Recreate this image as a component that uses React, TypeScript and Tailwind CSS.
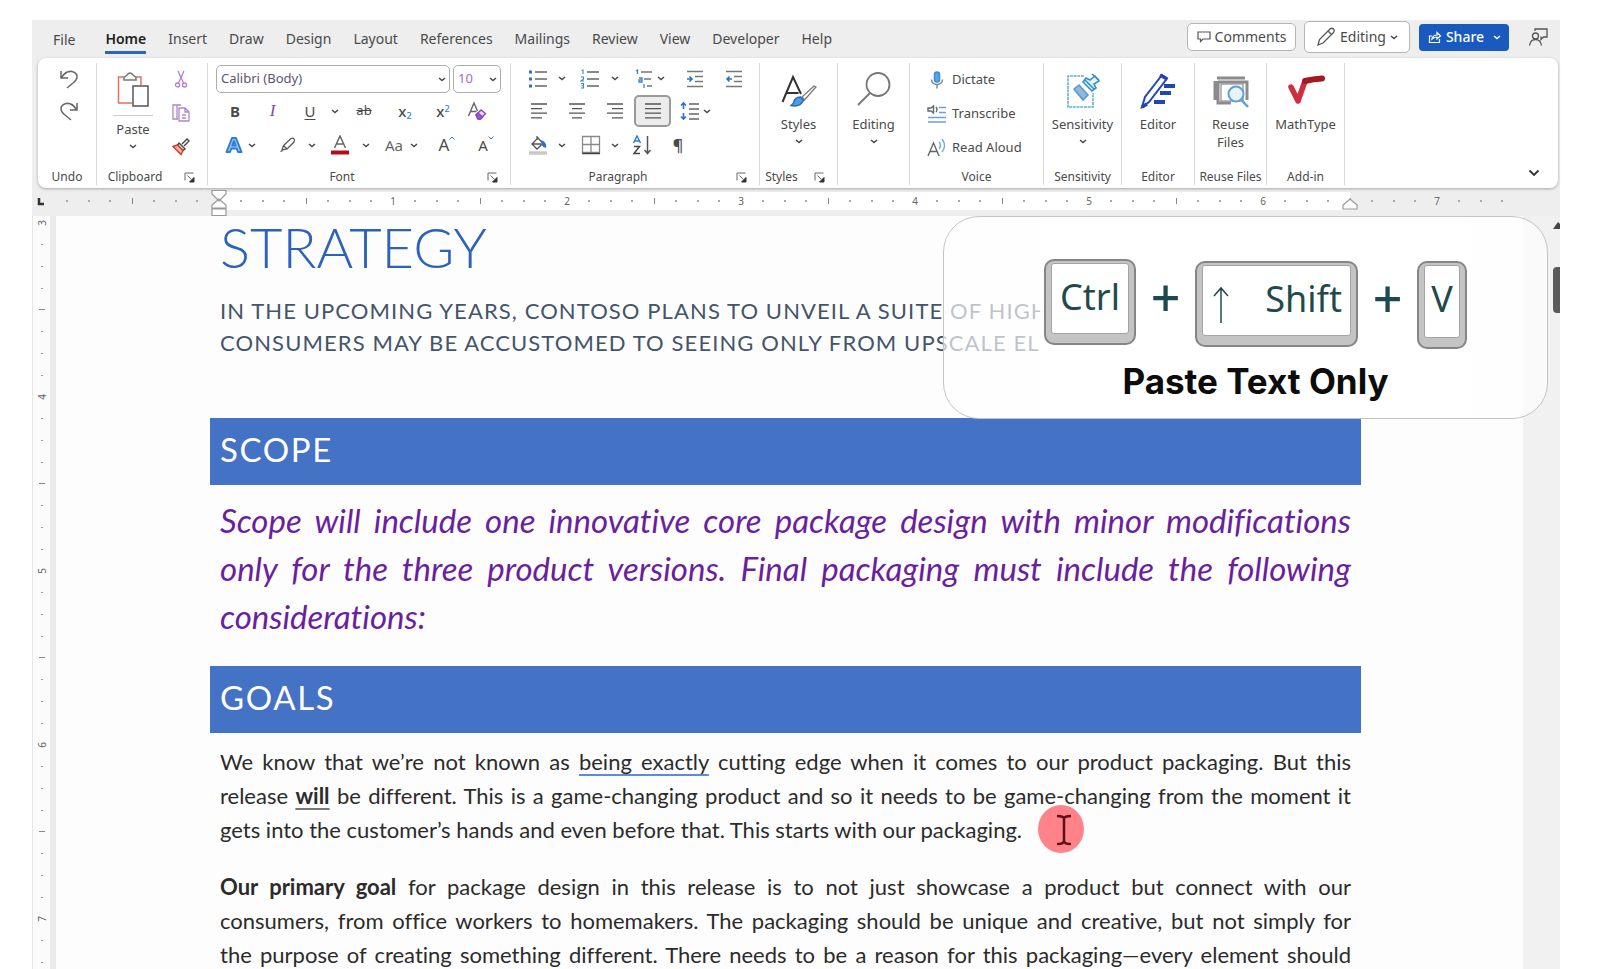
import React from "react";

const UI = "font-['Noto_Sans','Open_Sans',sans-serif]";
const DOC = "font-[Lato,'Noto_Sans',sans-serif]";

function Caret({ className = "" }: { className?: string }) {
  return (
    <svg viewBox="0 0 8 5" className={"h-[5px] w-2 shrink-0 " + className} fill="none" stroke="currentColor" strokeWidth="1.5">
      <path d="M1 1l3 2.6L7 1" />
    </svg>
  );
}

function CaretButton({ label, className = "" }: { label: string; className?: string }) {
  return (
    <button aria-label={label} className={"flex h-6 w-3 items-center justify-center " + className}>
      <Caret />
    </button>
  );
}

function Tool({ label, className, children }: { label: string; className: string; children: React.ReactNode }) {
  return (
    <button aria-label={label} className={"flex h-8 shrink-0 items-center justify-center " + className}>
      {children}
    </button>
  );
}

function Launcher() {
  return (
    <button aria-label="More options" className="flex h-4 w-3 items-center justify-center">
      <svg viewBox="0 0 11 11" className="h-[11px] w-[11px]" fill="none" stroke="#666">
        <path d="M1 8.5V1h8.5M3.5 3.5l4 4" />
        <path d="M10 5.5V10H5.5z" fill="#333" stroke="#333" />
      </svg>
    </button>
  );
}

function Group({ label, launcher, className, children }: { label: string; launcher?: boolean; className: string; children: React.ReactNode }) {
  return (
    <section aria-label={label || "Editing"} className={"flex h-[122px] shrink-0 flex-col border-r border-[#d9d9d9] " + className}>
      <div className="h-[106px] shrink-0">{children}</div>
      <div className="flex h-4 shrink-0 items-center">
        <span className={"flex-1 whitespace-nowrap text-center text-xs leading-4 " + (launcher ? "pr-2.5" : "")}>{label}</span>
        {launcher && (
          <span className="pr-3">
            <Launcher />
          </span>
        )}
      </div>
    </section>
  );
}

function BigButton({ label, second, caret, icon }: { label: string; second?: string; caret?: boolean; icon: React.ReactNode }) {
  return (
    <button className="flex w-full flex-col items-center pt-1 text-[13px] leading-[18px]">
      <span className="flex h-12 items-center justify-center">{icon}</span>
      <span className="whitespace-nowrap">{label}</span>
      {second && <span>{second}</span>}
      {caret && <Caret className="mt-1.5" />}
    </button>
  );
}

function Lines({ rows }: { rows: number[][] }) {
  return (
    <svg viewBox="0 0 18 18" className="h-[18px] w-[18px]" stroke="#555" strokeWidth="1.3">
      {rows.map(([a, b], i) => (
        <path key={i} d={`M${a} ${2 + i * 4.6}H${b}`} />
      ))}
    </svg>
  );
}

function ListIcon({ kind }: { kind: "bullet" | "number" | "multi" }) {
  if (kind === "multi")
    return (
      <svg viewBox="0 0 20 20" className="h-5 w-5" fill="none" stroke="#777" strokeWidth="1.3">
        <path d="M7 3h11M10 10h7M13 17h5" />
        <path d="M2 2l1.5-1v4M5 9h3v4H5v-2h3M10 15v4" stroke="#3a86d0" />
      </svg>
    );
  return (
    <svg viewBox="0 0 20 20" className="h-5 w-5" fill="none" stroke="#666" strokeWidth="1.3">
      <path d="M7 3h12M7 10h12M7 17h12" />
      {kind === "bullet" ? (
        <g fill="#2a72c8" stroke="none">
          <rect x="1" y="1.5" width="3" height="3" />
          <rect x="1" y="8.5" width="3" height="3" />
          <rect x="1" y="15.5" width="3" height="3" />
        </g>
      ) : (
        <path d="M1.5 1.5L3 1v4M1 8h2.500v2L1 12h3M1 14.500h2.500v4.500H1M1.500 16.700h2" stroke="#3a86d0" strokeWidth="1.100" />
      )}
    </svg>
  );
}

function IndentIcon({ left }: { left?: boolean }) {
  return (
    <svg viewBox="0 0 18 20" className="h-5 w-[18px]" fill="none" stroke="#777" strokeWidth="1.3">
      <path d="M1 2.500h16M9 7.500h8M9 12.500h8M1 17.500h16" />
      <path d={left ? "M7 10H2M4.500 7.500L2 10l2.500 2.500" : "M1 10h5M3.500 7.500L6 10l-2.500 2.500"} stroke="#2a72c8" strokeWidth="1.600" />
    </svg>
  );
}

const tabs = ["Home", "Insert", "Draw", "Design", "Layout", "References", "Mailings", "Review", "View", "Developer", "Help"];

function TabBar() {
  return (
    <header className="flex h-[38px] items-start justify-between pl-[21px] pr-3">
      <nav className="flex gap-[22px] pt-1.5 text-sm leading-6">
        <button className="mr-2 h-7">File</button>
        {tabs.map((t) => (
          <button
            key={t}
            className={t === "Home" ? "h-7 border-b-[3px] border-[#2f67b8] font-semibold text-[#222]" : "h-7 border-b-[3px] border-transparent"}
          >
            {t}
          </button>
        ))}
      </nav>
      <div className="flex h-[34px] items-center text-sm">
        <button className="flex h-[28px] w-[109px] items-center justify-center gap-1 rounded-[5px] border border-[#b5b5b5] bg-white">
          <svg viewBox="0 0 14 12" className="h-3 w-[14px]" fill="none" stroke="#555" strokeWidth="1.200">
            <path d="M1 1h12v7H6L3.500 10.500V8H1z" />
          </svg>
          Comments
        </button>
        <button className="ml-2 flex h-[32px] w-[106px] items-center justify-center gap-1 rounded-[5px] border border-[#b5b5b5] bg-white">
          <svg viewBox="0 0 20 20" className="h-5 w-5" fill="none" stroke="#555" strokeWidth="1.300">
            <path d="M2 18l1.500-5.500L14 2q2-1.500 3.500 0t0 3.500L7 16zM12 4l3.500 3.500" />
          </svg>
          Editing
          <Caret />
        </button>
        <div className="ml-[9px] flex h-[27px] w-[90px] items-center rounded-[4px] bg-[#185abd] text-white">
          <button className="flex flex-1 items-center justify-center gap-1 font-medium">
            <svg viewBox="0 0 14 14" className="h-[14px] w-[14px]" fill="none" stroke="#fff" strokeWidth="1.200">
              <path d="M4 6H1.500v6.500h10V9" />
              <path d="M4 9q.5-4 5-4V2.500L12.500 6 9 9V7Q6 7 4 9z" />
            </svg>
            Share
          </button>
          <button aria-label="Share options" className="flex h-full w-4 items-center">
            <Caret />
          </button>
        </div>
        <button aria-label="Feedback" className="ml-[19px]">
          <svg viewBox="0 0 20 20" className="h-5 w-5" fill="none" stroke="#555" strokeWidth="1.300">
            <circle cx="7.500" cy="9" r="3" />
            <path d="M1.500 18.500q1-6 6-6t6 6M7 4V2h12v8h-3.500L13 12.500V9.500" />
          </svg>
        </button>
      </div>
    </header>
  );
}

function FontGroup() {
  return (
    <Group label="Font" launcher className="w-[303px]">
      <div className="flex h-[31px] items-start gap-[3px] pl-2 pt-0.5">
        <div className="relative">
          <select aria-label="Font" className="h-[28px] w-[234px] appearance-none rounded-[5px] border border-[#adadad] bg-white pl-1 text-[13px] text-[#5f5378]">
            <option>Calibri (Body)</option>
          </select>
          <Caret className="pointer-events-none absolute right-1 top-3" />
        </div>
        <div className="relative">
          <select aria-label="Font size" className="h-[28px] w-[48px] appearance-none rounded-[5px] border border-[#adadad] bg-white pl-1 text-[13px] text-[#a06cc4]">
            <option>10</option>
          </select>
          <Caret className="pointer-events-none absolute right-1 top-3" />
        </div>
      </div>
      <div className="flex h-[34px] items-center pl-2">
        <Tool label="Bold" className="w-[38px] text-[15px] font-bold">B</Tool>
        <Tool label="Italic" className="w-[37px] font-['Liberation_Serif',serif] text-[17px] italic text-[#8e44ad]">I</Tool>
        <Tool label="Underline" className="w-[38px] text-[15px] underline underline-offset-2">U</Tool>
        <CaretButton label="Underline styles" />
        <Tool label="Strikethrough" className="w-[46px] text-[13px] line-through">ab</Tool>
        <Tool label="Subscript" className="w-9 text-[15px] font-medium">
          <span>x<sub className="text-[9px] text-[#2a7fd4]">2</sub></span>
        </Tool>
        <Tool label="Superscript" className="w-10 text-[15px] font-medium">
          <span>x<sup className="text-[9px] text-[#2a7fd4]">2</sup></span>
        </Tool>
        <Tool label="Clear formatting" className="w-7">
          <svg viewBox="0 0 20 20" className="h-5 w-5" fill="none" stroke="#666" strokeWidth="1.400">
            <path d="M1.500 15L7 2l3.500 8M3.500 10.500h6" />
            <path d="M9 14l5-5 4.500 3.500-5 5.500H11z" stroke="#8a45c0" fill="#e6d4f4" />
            <path d="M9 14l2-2 4.500 4-2 2H11z" stroke="#8a45c0" fill="#9b59d0" />
          </svg>
        </Tool>
      </div>
      <div className="flex h-[34px] items-center pl-3.5">
        <Tool label="Text effects" className="w-6">
          <svg viewBox="0 0 18 18" className="h-[18px] w-[18px]" stroke="#2d7fd3" strokeWidth="2" strokeLinejoin="round">
            <path d="M1.500 16L7 2h4l5.500 14h-3.500l-1.300-3.500H6.300L5 16zM7.300 9.500h3.400L9 5z" fill="#9cc6ef" fillRule="evenodd" />
          </svg>
        </Tool>
        <CaretButton label="Text effect styles" />
        <Tool label="Highlight" className="ml-3 w-9">
          <svg viewBox="0 0 18 18" className="h-[18px] w-[18px]" fill="none" stroke="#555" strokeWidth="1.300">
            <path d="M3 14l1.500-4.500L12 2.500q2-1 3 .5t0 3L8 13zM4.500 9.500L8 13M1.500 15.500l2.500-1" />
          </svg>
        </Tool>
        <CaretButton label="Highlight colors" />
        <Tool label="Font color" className="ml-0.5 w-10">
          <svg viewBox="0 0 20 20" className="h-5 w-5" fill="none" stroke="#666" strokeWidth="1.500">
            <path d="M4.500 13L10 1l5.500 12M6.500 9h7" />
            <path d="M1 17.500h18" stroke="#b30d17" strokeWidth="4" />
          </svg>
        </Tool>
        <CaretButton label="Font colors" />
        <Tool label="Change case" className="ml-2 w-[28px] text-[15px] text-[#666]">Aa</Tool>
        <CaretButton label="Case options" />
        <Tool label="Grow font" className="ml-2 w-[38px] text-[17px]">
          <span className="flex items-start">
            A
            <svg viewBox="0 0 6 4" className="mt-1 h-1 w-1.5" fill="none" stroke="#2a7fd4">
              <path d="M.5 3.500L3 1l2.500 2.500" />
            </svg>
          </span>
        </Tool>
        <Tool label="Shrink font" className="w-10 text-[15px]">
          <span className="flex items-start">
            A
            <svg viewBox="0 0 6 4" className="mt-0.5 h-1 w-1.5" fill="none" stroke="#2a7fd4">
              <path d="M.5.5L3 3 5.500.5" />
            </svg>
          </span>
        </Tool>
      </div>
    </Group>
  );
}

function ParagraphGroup() {
  return (
    <Group label="Paragraph" launcher className="w-[249px]">
      <div className="flex h-[31px] items-center pl-4">
        <Tool label="Bullets" className="w-[22px]"><ListIcon kind="bullet" /></Tool>
        <CaretButton label="Bullet styles" className="ml-[7px]" />
        <Tool label="Numbering" className="ml-[11px] w-[22px]"><ListIcon kind="number" /></Tool>
        <CaretButton label="Number styles" className="ml-[8px]" />
        <Tool label="Multilevel list" className="ml-[12px] w-[22px]"><ListIcon kind="multi" /></Tool>
        <CaretButton label="Multilevel styles" />
        <Tool label="Decrease indent" className="ml-[17px] w-[22px]"><IndentIcon /></Tool>
        <Tool label="Increase indent" className="ml-[17px] w-[22px]"><IndentIcon left /></Tool>
      </div>
      <div className="flex h-[34px] items-center pl-2">
        <Tool label="Align left" className="w-[39px]"><Lines rows={[[1, 17], [1, 12], [1, 17], [1, 12]]} /></Tool>
        <Tool label="Center" className="w-[38px]"><Lines rows={[[1, 17], [4, 14], [1, 17], [4, 14]]} /></Tool>
        <Tool label="Align right" className="w-[38px]"><Lines rows={[[1, 17], [6, 17], [1, 17], [6, 17]]} /></Tool>
        <Tool label="Justify" className="w-[37px] rounded-[5px] border-2 border-[#9a9a9a] bg-[#ececec]"><Lines rows={[[1, 17], [1, 17], [1, 17], [1, 17]]} /></Tool>
        <Tool label="Line spacing" className="ml-2 w-[22px]">
          <svg viewBox="0 0 20 20" className="h-5 w-5" fill="none" stroke="#666" strokeWidth="1.300">
            <path d="M9 3h10M9 8h10M9 13h10M9 18h10" />
            <path d="M3.500 2v6M1 4.500L3.500 2 6 4.500M3.500 12v6M1 15.500L3.500 18 6 15.500" stroke="#2a72c8" strokeWidth="1.600" />
          </svg>
        </Tool>
        <CaretButton label="Spacing options" />
      </div>
      <div className="flex h-[34px] items-center pl-4">
        <Tool label="Shading" className="w-[22px]">
          <svg viewBox="0 0 20 20" className="h-5 w-5" fill="none" stroke="#555" strokeWidth="1.300">
            <path d="M4 9l6-6 5 5.500-6 5.500zM9 5V1M4 9h9" />
            <path d="M14 6q4 2 3.500 6-2.500-.5-3.500-3z" fill="#2a72c8" stroke="#2a72c8" />
            <path d="M1 18h18" stroke="#c9c9c9" strokeWidth="3.500" />
          </svg>
        </Tool>
        <CaretButton label="Shading colors" className="ml-[7px]" />
        <Tool label="Borders" className="ml-[12px] w-[22px]">
          <svg viewBox="0 0 20 20" className="h-5 w-5" fill="none" stroke="#888" strokeWidth="1.300">
            <path d="M1.500 1.500h17v16h-17zM10 1.500v16M1.500 9.500h17" />
            <path d="M1 18.500h18" stroke="#444" />
          </svg>
        </Tool>
        <CaretButton label="Border styles" className="ml-[7px]" />
        <Tool label="Sort" className="ml-[10px] w-[22px]">
          <svg viewBox="0 0 20 20" className="h-5 w-5" fill="none" strokeWidth="1.500">
            <path d="M1.500 8L5 1l3.500 7M2.700 6h4.600" stroke="#2a7fd4" />
            <path d="M2 11.500h5.500L2 18.500h6" stroke="#444" />
            <path d="M15.500 1v17M12.500 15l3 3.500 3-3.500" stroke="#555" />
          </svg>
        </Tool>
        <Tool label="Show marks" className="ml-3.5 w-[22px] text-base font-semibold">¶</Tool>
      </div>
    </Group>
  );
}

function VoiceRow({ label, icon }: { label: string; icon: React.ReactNode }) {
  return (
    <button className="flex h-[34px] w-full items-center gap-[5px] pl-[17px] text-[13px]">
      <span className="flex w-5 justify-center">{icon}</span>
      {label}
    </button>
  );
}

function Ribbon() {
  return (
    <div className="ml-1.5 mr-0.5 flex h-[130px] overflow-hidden rounded-[8px] bg-white pt-[5px] shadow-[0_1px_3px_rgba(0,0,0,0.3)]">
      <Group label="Undo" className="w-[59px]">
        <div className="flex flex-col items-center pl-1">
          <Tool label="Undo" className="w-6">
            <svg viewBox="0 0 20 20" className="h-5 w-5" fill="none" stroke="#666" strokeWidth="1.500">
              <path d="M2 2v7h7M2.500 8.500Q7 1.500 13 2.500q5 1.500 5 5T14 14l-6 5" />
            </svg>
          </Tool>
          <Tool label="Redo" className="w-6">
            <svg viewBox="0 0 20 20" className="h-5 w-5" fill="none" stroke="#666" strokeWidth="1.500">
              <path d="M18 2v7h-7M17.500 8.500Q13 1.500 7 2.500 2 4 2 7.500T6 14l6 5" />
            </svg>
          </Tool>
        </div>
      </Group>
      <Group label="Clipboard" launcher className="w-[111px]">
        <div className="flex">
          <button className="ml-4 flex w-10 flex-col items-center pt-2 text-[13px] leading-[18px]">
            <svg viewBox="0 0 32 36" className="h-9 w-8" fill="none" strokeWidth="1.500">
              <path d="M8 6H1.500v26H15M18 6h6v8" stroke="#e0705f" />
              <path d="M7 9V6.500L10 4q3-4 6 0l3 2.500V9z" stroke="#777" fill="#fff" />
              <rect x="16" y="15" width="15" height="20" stroke="#555" fill="#fff" />
            </svg>
            <span className="mt-2 h-px w-full bg-[#ccc]" />
            <span className="mt-1">Paste</span>
            <Caret className="mt-1.5" />
          </button>
          <div className="ml-4 flex flex-col items-center">
            <Tool label="Cut" className="w-6">
              <svg viewBox="0 0 14 18" className="h-[18px] w-[14px]" fill="none" stroke="#b57fcf" strokeWidth="1.300">
                <path d="M4 1l5.500 12M10 1L4.500 13" />
                <circle cx="3.500" cy="15" r="2" />
                <circle cx="10.500" cy="15" r="2" />
              </svg>
            </Tool>
            <Tool label="Copy" className="mt-0.5 w-6">
              <svg viewBox="0 0 18 20" className="h-5 w-[18px]" fill="none" stroke="#b085c9" strokeWidth="1.300">
                <path d="M6 16H1V2h8M5 2v14" />
                <path d="M7 5h6l4 4v9H7zM13 5v4h4M10 12h4M10 15h4" />
              </svg>
            </Tool>
            <Tool label="Format painter" className="mt-0.5 w-6">
              <svg viewBox="0 0 18 18" className="h-[18px] w-[18px]" fill="none" strokeWidth="1.400">
                <path d="M10 6l5-5 2 2-5 5M7 5l6 6-2 1.500L5.500 7z" stroke="#444" />
                <path d="M5.500 7L1 8.500l8 8 2-4z" fill="#f3b3a6" stroke="#cf3b2a" />
              </svg>
            </Tool>
          </div>
        </div>
      </Group>
      <FontGroup />
      <ParagraphGroup />
      <Group label="Styles" launcher className="w-[78px]">
        <BigButton
          label="Styles"
          caret
          icon={
            <svg viewBox="0 0 36 34" className="h-[34px] w-9" fill="none" stroke="#333" strokeWidth="2">
              <path d="M1.500 28L12 3l8 17M5.500 19h12" />
              <path d="M33 12L21 23l2.500 3L35 13z" strokeWidth="1.300" stroke="#777" fill="#fff" />
              <path d="M19.500 23q-6 0-7 6l-2.500 2.500q9 2 12.500-5z" fill="#4a9be8" stroke="#2468b8" strokeWidth="1.400" />
            </svg>
          }
        />
      </Group>
      <Group label="" className="w-[72px]">
        <BigButton
          label="Editing"
          caret
          icon={
            <svg viewBox="0 0 34 38" className="h-[38px] w-[34px]" fill="none" stroke="#777" strokeWidth="1.800">
              <circle cx="21" cy="12.500" r="11.500" />
              <path d="M13 21L1 33" />
            </svg>
          }
        />
      </Group>
      <Group label="Voice" className="w-[134px]">
        <VoiceRow
          label="Dictate"
          icon={
            <svg viewBox="0 0 14 18" className="h-[18px] w-[14px]" fill="none" stroke="#7b8794" strokeWidth="1.500">
              <rect x="4.500" y="1" width="5" height="10" rx="2.500" fill="#58a6ea" stroke="#3a8bd4" />
              <path d="M1.500 8.500q.5 5 5.500 5t5.500-5M7 13.500v4" />
            </svg>
          }
        />
        <VoiceRow
          label="Transcribe"
          icon={
            <svg viewBox="0 0 20 20" className="h-5 w-5" fill="none" stroke="#666" strokeWidth="1.400">
              <path d="M6.500 2v7L4 7H1V4h3zM9 3q2 2.500 0 5" />
              <path d="M12 3.500h7M12 8.500h7M1 13.500h18M1 18h18" stroke="#6d9fd6" />
            </svg>
          }
        />
        <VoiceRow
          label="Read Aloud"
          icon={
            <svg viewBox="0 0 20 20" className="h-5 w-5" fill="none" stroke="#666" strokeWidth="1.400">
              <path d="M1 18L6.500 5 12 18M3 13.500h7" />
              <path d="M12 4q3 3 0 7M15 1q5 6.500 0 13" stroke="#6daae0" />
            </svg>
          }
        />
      </Group>
      <Group label="Sensitivity" className="w-[78px]">
        <BigButton
          label="Sensitivity"
          caret
          icon={
            <svg viewBox="0 0 34 36" className="h-9 w-[34px]" fill="none" stroke="#62add8" strokeWidth="1.600">
              <path d="M18 3H2v31h25V20" strokeDasharray="3 .7" />
              <path d="M8 16l5-4 9 10-5 5z" fill="#8fb9dc" stroke="#5c9acb" />
              <path d="M17 9l9 9 4-3-2-4 5-3-4-5-5 4-4-2z" fill="#e3f3fc" stroke="#338fcb" />
              <path d="M19 7l9 9M26 1l7 6" stroke="#338fcb" />
            </svg>
          }
        />
      </Group>
      <Group label="Editor" className="w-[73px]">
        <BigButton
          label="Editor"
          icon={
            <svg viewBox="0 0 36 36" className="h-9 w-9" fill="none" stroke="#2046b4" strokeWidth="2">
              <path d="M2 34l3-10L22 2l5 3.500L9 29z" fill="#fff" />
              <path d="M20 2l7 4M2 34l5-3" strokeWidth="3.500" />
              <path d="M24 13h11M20 20h11M14 29h11" strokeWidth="4" />
            </svg>
          }
        />
      </Group>
      <Group label="Reuse Files" className="w-[72px]">
        <BigButton
          label="Reuse"
          second="Files"
          icon={
            <svg viewBox="0 0 36 34" className="h-[34px] w-9" fill="none" stroke="#8b8b8b" strokeWidth="2">
              <path d="M4 4h28M2 7v19M5 7v22h13M5 8h29v18" strokeWidth="3" />
              <rect x="8" y="10" width="22" height="17" fill="#fff" strokeWidth="1.200" />
              <circle cx="23" cy="20" r="7.500" fill="#e9f3fc" stroke="#5c9fe0" />
              <path d="M28.500 26l6.500 7" stroke="#5c9fe0" strokeWidth="2.500" />
            </svg>
          }
        />
      </Group>
      <Group label="Add-in" className="w-[78px]">
        <BigButton
          label="MathType"
          icon={
            <svg viewBox="0 0 38 32" className="h-8 w-[38px]" fill="none" strokeLinecap="round" strokeLinejoin="round">
              <path d="M4 12l7 14L18 6" stroke="#cf2d40" strokeWidth="5.500" />
              <path d="M18 6q8-2 17-2.500" stroke="#a51722" strokeWidth="6" />
            </svg>
          }
        />
      </Group>
      <button aria-label="Collapse ribbon" className="ml-auto mr-[18px] mt-[102px] h-4 w-3 text-[#333]">
        <svg viewBox="0 0 12 8" className="h-2 w-3" fill="none" stroke="currentColor" strokeWidth="1.800">
          <path d="M1.500 1.500L6 6l4.500-4.500" />
        </svg>
      </button>
    </div>
  );
}

function Tick({ k, vertical }: { k: number; vertical?: boolean }) {
  if (k % 8 === 0 && k !== 0)
    return <span className={vertical ? "-rotate-90 text-[10px] leading-none" : "text-[10px] leading-none"}>{k / 8}</span>;
  if (k % 4 === 0 && k !== 0) return <span className={vertical ? "h-px w-1.5 bg-[#888]" : "h-1.5 w-px bg-[#888]"} />;
  return k === 0 ? null : <span className={vertical ? "h-px w-0.5 bg-[#999]" : "h-0.5 w-0.5 bg-[#aaa]"} />;
}

function HorizontalRuler() {
  const ticks = Array.from({ length: 67 }, (_, i) => i - 7);
  return (
    <div className="relative mt-0.5 flex h-[26px] pt-0.5 text-[#666]">
      <svg viewBox="0 0 8 8" className="ml-[5px] mt-[6px] h-2 w-2" stroke="#333" strokeWidth="2.500" fill="none">
        <path d="M2 0v6h5" />
      </svg>
      <div className="ml-[174px] mr-[210px] h-[18px] flex-1 bg-white" />
      <div className="absolute left-6 top-0.5 flex h-[18px] w-[1457px]">
        {ticks.map((k) => (
          <span key={k} className="flex flex-1 items-center justify-center">
            <Tick k={k} />
          </span>
        ))}
      </div>
      <svg viewBox="0 0 16 26" className="absolute left-[179px] top-0 h-[26px] w-4" fill="#fff" stroke="#999" strokeWidth="1.200">
        <path d="M1 .5h14v3.500L8 11 1 4zM1 18v-3l7-6 7 6v3zM1 19h14v6.500H1z" />
      </svg>
      <svg viewBox="0 0 16 12" className="absolute left-[1310px] top-2 h-3 w-4" fill="#fff" stroke="#999" strokeWidth="1.200">
        <path d="M1 11V7l7-6 7 6v4z" />
      </svg>
    </div>
  );
}

function VerticalRuler() {
  const ticks = Array.from({ length: 35 }, (_, i) => i + 24);
  return (
    <div className="flex w-[18px] shrink-0 flex-col overflow-hidden border-l border-[#e6e6e6] bg-[#fbfbfb]">
      <div className="-mt-1 flex h-[761px] shrink-0 flex-col text-[#666]">
        {ticks.map((k) => (
          <span key={k} className="flex flex-1 items-center justify-center">
            <Tick k={k} vertical />
          </span>
        ))}
      </div>
    </div>
  );
}

function Line({ children, last }: { children: React.ReactNode; last?: boolean }) {
  return <span className={last ? "block whitespace-nowrap" : "block whitespace-nowrap text-justify [text-align-last:justify]"}>{children}</span>;
}

function Key({ className, children }: { className: string; children: React.ReactNode }) {
  return (
    <kbd className={"flex rounded-[10px] border-2 border-[#858585] bg-[#c4c4c4] px-[5px] pb-[9px] pt-0.5 " + className}>
      <span className="flex flex-1 items-start justify-between rounded-[3px] border border-[#a4a4a4] bg-white font-['Noto_Sans',sans-serif] text-[36px] leading-[66px]">
        {children}
      </span>
    </kbd>
  );
}

function ShortcutCard() {
  return (
    <aside className="absolute right-3 top-0 flex h-[203px] w-[605px] justify-end rounded-[36px] border border-[#c4c4c4] bg-white/65 pr-[76px]">
      <div className="flex w-[431px] flex-col items-center bg-white/90 pt-[42px] text-[#1f4a4c]">
        <div className="flex w-full items-start pl-1">
          <Key className="h-[86px] w-[92px]">
            <span className="flex-1 text-center">Ctrl</span>
          </Key>
          <span className="w-[59px] text-center font-['Noto_Sans',sans-serif] text-[52px] font-medium leading-[76px]">+</span>
          <Key className="mt-0.5 h-[86px] w-[163px]">
            <svg viewBox="0 0 16 38" className="ml-2.5 mt-5 h-[38px] w-4" fill="none" stroke="currentColor" strokeWidth="1.500">
              <path d="M8 37V2M1 10l7-8 7 8" />
            </svg>
            <span className="pr-2">Shift</span>
          </Key>
          <span className="w-[59px] text-center font-['Noto_Sans',sans-serif] text-[52px] font-medium leading-[78px]">+</span>
          <Key className="mt-0.5 h-[88px] w-[50px]">
            <span className="flex-1 text-center">V</span>
          </Key>
        </div>
        <p className="mt-3 whitespace-nowrap font-[Inter,sans-serif] text-[35px] font-bold leading-10 text-[#0c0c0c]">Paste Text Only</p>
      </div>
    </aside>
  );
}

function Document() {
  return (
    <main className={"min-w-0 flex-1 bg-[#fdfdfd] pl-[154px] pr-[162px] [font-variant-ligatures:none] " + DOC}>
      <h1 className="px-2.5 text-[56px] font-light leading-[62px] text-[#2a62bd]">STRATEGY</h1>
      <p className="mt-[17px] whitespace-nowrap px-2.5 text-[22px] leading-8 tracking-wider text-[#44546a]">
        IN THE UPCOMING YEARS, CONTOSO PLANS TO UNVEIL A SUITE OF HIGH
        <br />
        CONSUMERS MAY BE ACCUSTOMED TO SEEING ONLY FROM UPSCALE EL
      </p>
      <h2 className="mt-[59px] h-[67px] bg-[#4472c4] px-2.5 text-[33px] leading-[62px] tracking-wider text-white">SCOPE</h2>
      <p className="mt-[11px] px-2.5 text-[33px] italic leading-[48px] text-[#6a1fa0]">
        <Line>Scope will include one innovative core package design with minor modifications</Line>
        <Line>only for the three product versions. Final packaging must include the following</Line>
        <Line last>considerations:</Line>
      </p>
      <h2 className="mt-[26px] h-[67px] bg-[#4472c4] px-2.5 text-[33px] leading-[62px] tracking-wider text-white">GOALS</h2>
      <p className="mt-3 px-2.5 text-[22px] leading-[34px] text-[#2b2b2b]">
        <Line>
          We know that we’re not known as{" "}
          <span className="underline decoration-[#5b8be0] decoration-2 underline-offset-4">being exactly</span> cutting edge when it comes to our product
          packaging. But this
        </Line>
        <Line>
          release <b className="underline decoration-[#777] decoration-2 underline-offset-4">will</b> be different. This is a game-changing product and so it needs to be
          game-changing from the moment it
        </Line>
        <Line last>
          gets into the customer’s hands and even before that. This starts with our packaging.
          <span className="relative">
            <svg viewBox="0 0 48 50" className="absolute -top-3 left-4 h-[50px] w-12">
              <ellipse cx="23" cy="25" rx="23" ry="24" fill="#ff5a60" fillOpacity=".75" />
              <path d="M19 12q7 0 7 3 0-3 7-3M26 14v24M19 40q7 0 7-3 0 3 7 3" fill="none" stroke="#5a1216" strokeWidth="2.500" />
            </svg>
          </span>
        </Line>
      </p>
      <p className="mt-[23px] px-2.5 text-[22px] leading-[34px] text-[#2b2b2b]">
        <Line>
          <b>Our primary goal</b> for package design in this release is to not just showcase a product but connect with our
        </Line>
        <Line>consumers, from office workers to homemakers. The packaging should be unique and creative, but not simply for</Line>
        <Line>the purpose of creating something different. There needs to be a reason for this packaging—every element should</Line>
      </p>
    </main>
  );
}

export default function App() {
  return (
    <div className="h-screen overflow-hidden bg-white pl-8 pr-10 pt-5">
      <div className={"flex h-full flex-col bg-[#eeeeee] text-[#4a4a4a] " + UI}>
        <TabBar />
        <Ribbon />
        <HorizontalRuler />
        <div className="relative flex min-h-0 flex-1">
          <VerticalRuler />
          <div className="w-1.5 shrink-0 bg-[#ebebeb]" />
          <Document />
          <div className="flex w-[37px] shrink-0 flex-col items-end bg-[#f1f1f1]">
            <svg viewBox="0 0 7 8" className="mt-[5px] h-2 w-[7px]" fill="#444">
              <path d="M0 8l5-7 2 2v5z" />
            </svg>
            <div className="mt-[38px] h-[46px] w-[7px] rounded-l-[4px] bg-[#5a5a5a]" />
          </div>
          <ShortcutCard />
        </div>
      </div>
    </div>
  );
}
